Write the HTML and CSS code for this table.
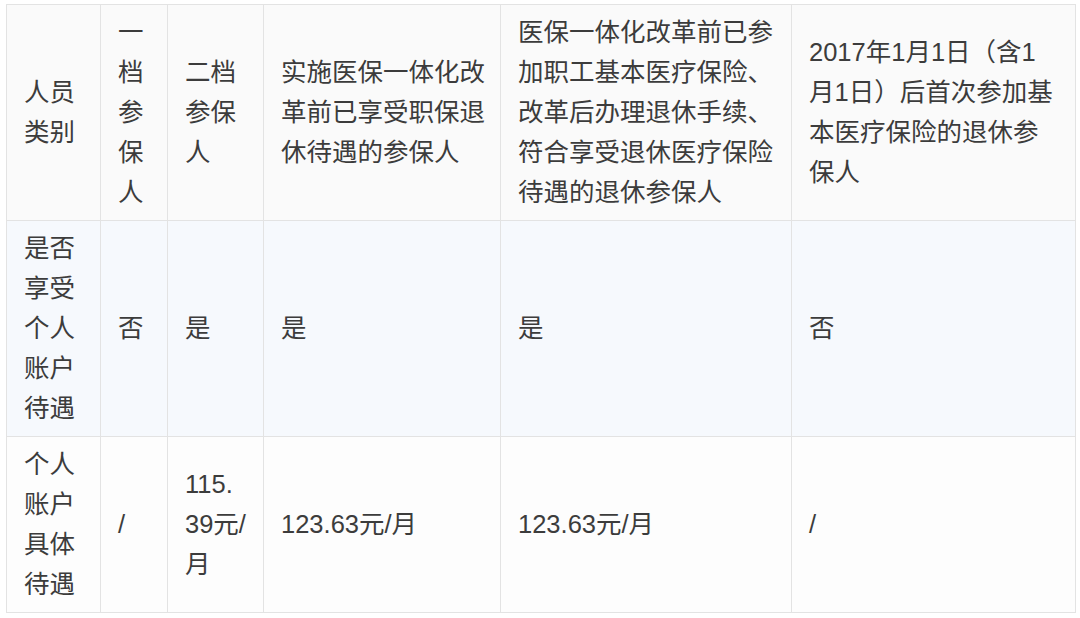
FILE: index.html
```html
<!DOCTYPE html>
<html lang="zh-CN">
<head>
<meta charset="utf-8">
<title>个人账户待遇</title>
<link rel="stylesheet" href="styles.css">
</head>
<body>
<div class="wrap">
<table class="tbl">
<colgroup>
<col class="c1"><col class="c2"><col class="c3"><col class="c4"><col class="c5"><col class="c6">
</colgroup>
<tr class="r-head">
<td>人员类别</td>
<td>一档参保人</td>
<td>二档参保人</td>
<td class="nw">实施医保一体化改<br>革前已享受职保退<br>休待遇的参保人</td>
<td class="nw">医保一体化改革前已参<br>加职工基本医疗保险、<br>改革后办理退休手续、<br>符合享受退休医疗保险<br>待遇的退休参保人</td>
<td class="nw">2017年1月1日（含1<br>月1日）后首次参加基<br>本医疗保险的退休参<br>保人</td>
</tr>
<tr class="r-alt">
<td>是否享受个人账户待遇</td>
<td>否</td>
<td>是</td>
<td>是</td>
<td>是</td>
<td>否</td>
</tr>
<tr class="r-plain">
<td>个人账户具体待遇</td>
<td>/</td>
<td class="nw">115.<br>39元/<br>月</td>
<td class="nw">123.63元/月</td>
<td class="nw">123.63元/月</td>
<td>/</td>
</tr>
</table>
</div>
</body>
</html>
```
FILE: styles.css
```css
html, body {
  margin: 0;
  padding: 0;
  background: #ffffff;
}
.wrap {
  padding: 4px 0 0 6px;
}
.tbl {
  border-collapse: collapse;
  table-layout: fixed;
  width: 1070px;
  font-family: "Liberation Sans", "Noto Sans CJK SC", sans-serif;
  font-size: 25.5px;
  line-height: 40px;
  color: #3c3c3c;
}
.c1 { width: 94px; }
.c2 { width: 67px; }
.c3 { width: 96px; }
.c4 { width: 237px; }
.c5 { width: 291px; }
.c6 { width: 284px; }
.tbl td {
  border: 1px solid #e3e3e3;
  padding: 7px 16px 8px 17px;
  vertical-align: middle;
  text-align: left;
  word-break: break-all;
  overflow: visible;
}
.tbl td.nw {
  white-space: nowrap;
}
.r-head td { background: #fafafa; }
.r-alt td { background: #f6f9fd; }
.r-plain td { background: #fdfdfd; }
```
